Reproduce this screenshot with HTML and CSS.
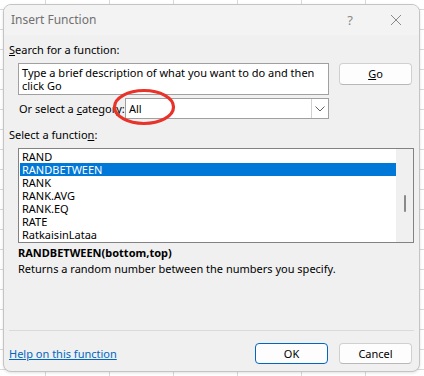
FILE: index.html
```html
<!DOCTYPE html>
<html>
<head>
<meta charset="utf-8">
<link rel="stylesheet" href="styles.css">
</head>
<body>
<div class="dialog">
  <div class="titlebar">
    <span class="title">Insert Function</span>
    <span class="tb-icons">
      <span class="help">?</span>
      <svg class="close" width="12" height="12" viewBox="0 0 12 12"><path d="M1 1L11 11M11 1L1 11" stroke="#8a8a8a" stroke-width="1" fill="none"/></svg>
    </span>
  </div>
  <div class="content">
    <div class="lbl lbl1"><u>S</u>earch for a function:</div>
    <div class="search-row">
      <div class="searchbox">Type a brief description of what you want to do and then click Go</div>
      <button class="btn go"><u>G</u>o</button>
    </div>
    <div class="cat-row">
      <span class="cat-lbl">Or select a <u>c</u>ategory:</span>
      <div class="select">
        <span class="sel-val">All</span>
        <span class="sel-arrow"><svg width="10" height="6" viewBox="0 0 10 6"><path d="M0.5 0.5L5 5L9.5 0.5" stroke="#606060" stroke-width="1" fill="none"/></svg></span>
      </div>
      <svg class="annot" width="68" height="42" viewBox="0 0 68 42"><ellipse cx="34" cy="20" rx="29.5" ry="16.5" stroke="#e8332a" stroke-width="3.2" fill="none"/></svg>
    </div>
    <div class="lbl lbl2">Select a functio<u>n</u>:</div>
    <div class="list">
      <div class="items">
        <div class="item">RAND</div>
        <div class="item sel">RANDBETWEEN</div>
        <div class="item">RANK</div>
        <div class="item">RANK.AVG</div>
        <div class="item">RANK.EQ</div>
        <div class="item">RATE</div>
        <div class="item">RatkaisinLataa</div>
      </div>
      <div class="scroll"><div class="thumb"></div></div>
    </div>
    <div class="sig">RANDBETWEEN(bottom,top)</div>
    <div class="desc">Returns a random number between the numbers you specify.</div>
    <div class="sep"></div>
    <div class="footer">
      <a class="link" href="#">Help on this function</a>
      <div class="btns">
        <button class="btn ok">OK</button>
        <button class="btn cancel">Cancel</button>
      </div>
    </div>
  </div>
</div>
</body>
</html>
```
FILE: styles.css
```css
html, body {
  margin: 0;
  padding: 0;
}
body {
  width: 424px;
  height: 376px;
  overflow: hidden;
  font-family: "Segoe UI", "Noto Sans", "Open Sans", sans-serif;
  font-size: 11px;
  color: #000;
  background-color: #ffffff;
  background-image:
    linear-gradient(to right, #d9d9d9 1px, transparent 1px),
    linear-gradient(to bottom, #d9d9d9 1px, transparent 1px);
  background-size: 64px 20px, 64px 20px;
  background-position: 45px 0, 0 9px;
}
.dialog {
  margin: 4px 0 0 3px;
  width: 415px;
  height: 366px;
  border: 1px solid #c4c4c4;
  border-radius: 8px;
  background: #f0f0f0;
  box-shadow: 0 1px 3px rgba(0,0,0,0.12);
  overflow: hidden;
  position: relative;
}
.titlebar {
  height: 30px;
  background: #f3f3f3;
  display: flex;
  align-items: center;
  justify-content: space-between;
  padding-left: 7px;
}
.title {
  color: #707070;
  font-size: 12px;
  line-height: 14px;
}
.tb-icons {
  display: flex;
  align-items: center;
}
.help {
  color: #8a8a8a;
  font-size: 13px;
  margin-right: 37px;
}
.close {
  display: block;
  margin-right: 17px;
}
.content {
  padding: 0 5px;
}
.lbl {
  line-height: 14px;
}
.lbl1 {
  margin-top: 8px;
}
.search-row {
  display: flex;
  align-items: flex-start;
  margin-top: 6px;
}
.searchbox {
  box-sizing: border-box;
  margin-left: 9px;
  width: 311px;
  height: 32px;
  background: #fff;
  border: 1px solid #a0a0a0;
  padding: 2px 3px 0 3px;
  line-height: 13px;
}
.btn {
  font-family: inherit;
  font-size: 11px;
  color: #000;
  background: #fdfdfd;
  border: 1px solid #d0d0d0;
  border-bottom-color: #b8b8b8;
  border-radius: 4px;
  box-sizing: border-box;
  width: 73px;
  height: 21px;
  padding: 0;
  line-height: 18px;
}
.go {
  margin-left: 10px;
  height: 22px;
}
.cat-row {
  display: flex;
  align-items: center;
  margin-top: 3px;
  height: 21px;
  position: relative;
}
.cat-lbl {
  margin-left: 10px;
  width: 106px;
  white-space: nowrap;
}
.select {
  box-sizing: border-box;
  width: 204px;
  height: 21px;
  border: 1px solid #a0a0a0;
  background: #fff;
  display: flex;
  align-items: center;
  justify-content: space-between;
}
.sel-val {
  padding-left: 3px;
}
.sel-arrow {
  width: 16px;
  height: 19px;
  border-left: 1px solid #d0d0d0;
  display: flex;
  align-items: center;
  justify-content: center;
}
.annot {
  position: absolute;
  left: 101px;
  top: -11px;
}
.lbl2 {
  margin-top: 9px;
}
.list {
  box-sizing: border-box;
  margin-top: 6px;
  margin-left: 9px;
  width: 396px;
  height: 95px;
  border: 1px solid #828282;
  background: #fff;
  display: flex;
  padding: 1px 0 1px 1px;
}
.items {
  flex: 1;
}
.item {
  height: 13px;
  line-height: 13px;
  padding-left: 2px;
}
.item.sel {
  background: #0078d7;
  color: #fff;
}
.scroll {
  width: 17px;
  background: #f0f0f0;
  margin-top: -1px;
  margin-bottom: -1px;
  display: flex;
  justify-content: center;
}
.thumb {
  width: 2px;
  height: 17px;
  margin-top: 46px;
  background: #8a8a8a;
  border-radius: 1px;
}
.sig {
  margin-top: 3px;
  margin-left: 9px;
  font-weight: bold;
  line-height: 14px;
}
.desc {
  margin-top: 2px;
  margin-left: 9px;
  line-height: 14px;
}
.sep {
  margin-top: 54px;
  height: 1px;
  background: #dadada;
}
.footer {
  margin-top: 12px;
  display: flex;
  align-items: center;
  justify-content: space-between;
  height: 21px;
}
.link {
  color: #0067c0;
  text-decoration: underline;
}
.btns {
  display: flex;
  gap: 11px;
  margin-right: 2px;
}
.ok {
  border: 1px solid #0067c0;
}
```
